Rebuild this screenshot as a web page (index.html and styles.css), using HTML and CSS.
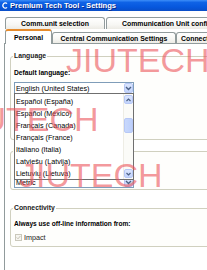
FILE: index.html
```html
<!DOCTYPE html>
<html>
<head>
<meta charset="utf-8">
<title>Premium Tech Tool - Settings</title>
<link rel="stylesheet" href="styles.css">
</head>
<body>
<div class="window">
  <div class="titlebar">
    <svg class="app-icon" width="6" height="7" viewBox="0 0 6 7"><path d="M5 1.6 A2.4 2.6 0 1 0 5 5.4" fill="none" stroke="#fff" stroke-width="1.3"/></svg>
    <span class="title">Premium Tech Tool - Settings</span>
  </div>
  <div class="client">
    <div class="tabrow row1">
      <div class="tab t-comm">Comm.unit selection</div>
      <div class="tab t-commconf">Communication Unit configuration</div>
    </div>
    <div class="tabrow row2">
      <div class="tab sel t-personal">Personal</div>
      <div class="tab t-central">Central Communication Settings</div>
      <div class="tab t-conn">Connectivity</div>
    </div>
    <div class="panel">
      <fieldset class="group g-lang">
        <legend>Language</legend>
        <div class="label">Default language:</div>
        <div class="select">
          <span class="value">English (United States)</span>
          <span class="drop-btn"><svg width="7" height="5" viewBox="0 0 7 5"><path d="M1 1 L3.5 3.5 L6 1" fill="none" stroke="#4d6185" stroke-width="1.4"/></svg></span>
          <div class="droplist">
            <ul class="items">
              <li>Español (España)</li>
              <li>Español (México)</li>
              <li>Français (Canada)</li>
              <li>Français (France)</li>
              <li>Italiano (Italia)</li>
              <li>Latviešu (Latvija)</li>
              <li>Lietuvių (Lietuva)</li>
            </ul>
            <div class="scrollbar">
              <span class="sb-btn"><svg width="5" height="4" viewBox="0 0 5 4"><path d="M0.5 3 L2.5 1 L4.5 3" fill="none" stroke="#4d6185" stroke-width="1.2"/></svg></span>
              <span class="sb-space1"></span>
              <span class="sb-thumb"></span>
              <span class="sb-space2"></span>
              <span class="sb-btn"><svg width="5" height="4" viewBox="0 0 5 4"><path d="M0.5 1 L2.5 3 L4.5 1" fill="none" stroke="#4d6185" stroke-width="1.2"/></svg></span>
            </div>
          </div>
        </div>
      </fieldset>
      <fieldset class="group g-units">
        <legend>Units</legend>
        <div class="select small">
          <span class="value">Metric</span>
          <span class="drop-btn"><svg width="7" height="5" viewBox="0 0 7 5"><path d="M1 1 L3.5 3.5 L6 1" fill="none" stroke="#4d6185" stroke-width="1.4"/></svg></span>
        </div>
      </fieldset>
      <fieldset class="group g-conn">
        <legend>Connectivity</legend>
        <div class="label">Always use off-line information from:</div>
        <label class="check-row">
          <span class="checkbox"><svg width="5" height="5" viewBox="0 0 5 5"><path d="M0.6 2.4 L2 3.8 L4.4 1" fill="none" stroke="#c4c2b4" stroke-width="1"/></svg></span>
          <span>Impact</span>
        </label>
      </fieldset>
    </div>
  </div>
  <span class="watermark wm-top">JIUTECH</span>
  <span class="watermark wm-mid">JIUTECH</span>
  <span class="watermark wm-bot">JIUTECH</span>
</div>
</body>
</html>
```

FILE: styles.css
```css
html, body {
  margin: 0;
  padding: 0;
}
body {
  width: 207px;
  height: 270px;
  overflow: hidden;
  background: #fff;
  font-family: "Liberation Sans", Arial, sans-serif;
  color: #000;
}
.window {
  position: relative;
  width: 207px;
  height: 270px;
  overflow: hidden;
  background: #fff;
}

/* title bar */
.titlebar {
  height: 11px;
  display: flex;
  align-items: center;
  gap: 2px;
  padding-left: 2px;
  background: linear-gradient(180deg, #3d8ef8 0%, #0f63e6 22%, #0657dd 65%, #0a4ec8 100%);
  color: #fff;
}
.app-icon {
  flex: none;
}
.title {
  font-weight: bold;
  font-size: 7.6px;
  line-height: 11px;
  white-space: nowrap;
  text-shadow: 1px 1px 0 #0c2a86;
}

/* tabs */
.client {
  padding-top: 6px;
}
.tabrow {
  display: flex;
  width: 320px;
}
.row1 {
  height: 12px;
  padding-left: 5px;
  gap: 1px;
}
.row2 {
  height: 14px;
  padding-left: 5px;
  align-items: flex-end;
}
.tab {
  box-sizing: border-box;
  border: 1px solid #919b9c;
  border-bottom: none;
  border-radius: 3px 3px 0 0;
  background: linear-gradient(180deg, #ffffff 0%, #f7f7f4 60%, #ecebe5 100%);
  font-weight: bold;
  font-size: 6.9px;
  white-space: nowrap;
  display: flex;
  align-items: center;
  justify-content: center;
  flex: none;
}
.row1 .tab {
  height: 12px;
}
.t-comm {
  width: 100px;
}
.t-commconf {
  width: 170px;
  justify-content: flex-start;
  padding-left: 15px;
}
.t-personal {
  width: 47px;
  height: 15px;
  border-top: 2px solid #e68b2c;
  background: #fff;
  margin-bottom: -1px;
  position: relative;
  z-index: 1;
  padding-bottom: 1px;
}
.t-central {
  width: 124px;
  height: 11px;
}
.t-conn {
  width: 70px;
  height: 11px;
  justify-content: flex-start;
  padding-left: 4px;
}

/* panel */
.panel {
  margin-left: 4px;
  height: 240px;
  width: 280px;
  border-top: 1px solid #919b9c;
  border-left: 1px solid #919b9c;
  padding: 8px 0 0 5px;
  box-sizing: border-box;
  display: flex;
  flex-direction: column;
}
.group {
  margin: 0;
  width: 260px;
  box-sizing: border-box;
  border: 1px solid #d0d0bf;
  border-radius: 3px;
  padding: 0 3px;
  min-width: 0;
  background: #fefefc;
}
.group legend {
  padding: 0 1px;
  margin-left: -1px;
  font-weight: bold;
  font-size: 6.8px;
  line-height: 8px;
  color: #1a1a1a;
}
.label {
  font-weight: bold;
  font-size: 6.7px;
  line-height: 8px;
  white-space: nowrap;
}
.g-lang {
  padding-bottom: 45px;
}
.g-lang .label {
  margin-top: 9px;
}
.g-lang .select {
  margin-top: 5px;
}
.g-units {
  margin-top: 7px;
  padding-bottom: 1px;
}
.g-units .select {
  margin-top: 22px;
}
.g-conn {
  margin-top: 14px;
  padding-bottom: 5px;
}
.g-conn .label {
  margin-top: 8px;
  font-size: 6.6px;
}

/* select */
.select {
  position: relative;
  box-sizing: border-box;
  width: 120px;
  height: 12px;
  border: 1px solid #7f9db9;
  background: #fff;
  display: flex;
  align-items: center;
  justify-content: space-between;
  padding-left: 1px;
  font-size: 7.2px;
}
.select.small {
  height: 11px;
}
.value {
  white-space: nowrap;
}
.drop-btn {
  box-sizing: border-box;
  width: 9px;
  height: 10px;
  border: 1px solid #b7c8f6;
  border-radius: 2px;
  background: linear-gradient(180deg, #dbe6fe 0%, #c3d4fb 100%);
  display: flex;
  align-items: center;
  justify-content: center;
}
.select.small .drop-btn {
  height: 9px;
}

/* dropdown list overlay */
.droplist {
  position: absolute;
  left: -1px;
  top: 10px;
  width: 120px;
  height: 87px;
  box-sizing: border-box;
  border: 1px solid #6f6f6f;
  background: #fff;
  display: flex;
  z-index: 5;
  overflow: hidden;
}
.items {
  list-style: none;
  margin: 0;
  padding: 2px 0 0 1px;
  flex: 1;
}
.items li {
  height: 12px;
  line-height: 12px;
  font-size: 7.2px;
  white-space: nowrap;
}
.scrollbar {
  width: 10px;
  flex: none;
  display: flex;
  flex-direction: column;
  align-items: center;
  padding: 1px 0;
  box-sizing: border-box;
  background: #fbfbf8;
  border-left: 1px solid #eeede5;
}
.sb-btn {
  box-sizing: border-box;
  width: 9px;
  height: 9px;
  border: 1px solid #b7c8f6;
  border-radius: 2px;
  background: linear-gradient(180deg, #dbe6fe 0%, #c3d4fb 100%);
  display: flex;
  align-items: center;
  justify-content: center;
  flex: none;
}
.sb-space1 {
  height: 14px;
  flex: none;
}
.sb-thumb {
  box-sizing: border-box;
  width: 9px;
  height: 15px;
  border: 1px solid #b7c8f6;
  border-radius: 2px;
  background: linear-gradient(90deg, #c8d8fc 0%, #bccffb 100%);
  flex: none;
}
.sb-space2 {
  flex: 1;
}

/* checkbox */
.check-row {
  display: flex;
  align-items: center;
  gap: 2px;
  margin-top: 5px;
  height: 8px;
  padding-left: 1px;
  font-size: 7.2px;
  color: #222;
}
.checkbox {
  box-sizing: border-box;
  width: 7px;
  height: 7px;
  border: 1px solid #cac8bb;
  background: #f6f5f0;
  display: flex;
  align-items: center;
  justify-content: center;
}

/* watermarks */
.watermark {
  position: absolute;
  font-family: "Liberation Sans", Arial, sans-serif;
  font-size: 34px;
  line-height: 34px;
  color: rgba(236, 84, 90, 0.6);
  white-space: nowrap;
  pointer-events: none;
  z-index: 20;
}
.wm-top {
  left: 66px;
  top: 43px;
}
.wm-mid {
  left: -45px;
  top: 102px;
}
.wm-bot {
  left: 19px;
  top: 158px;
}
```
